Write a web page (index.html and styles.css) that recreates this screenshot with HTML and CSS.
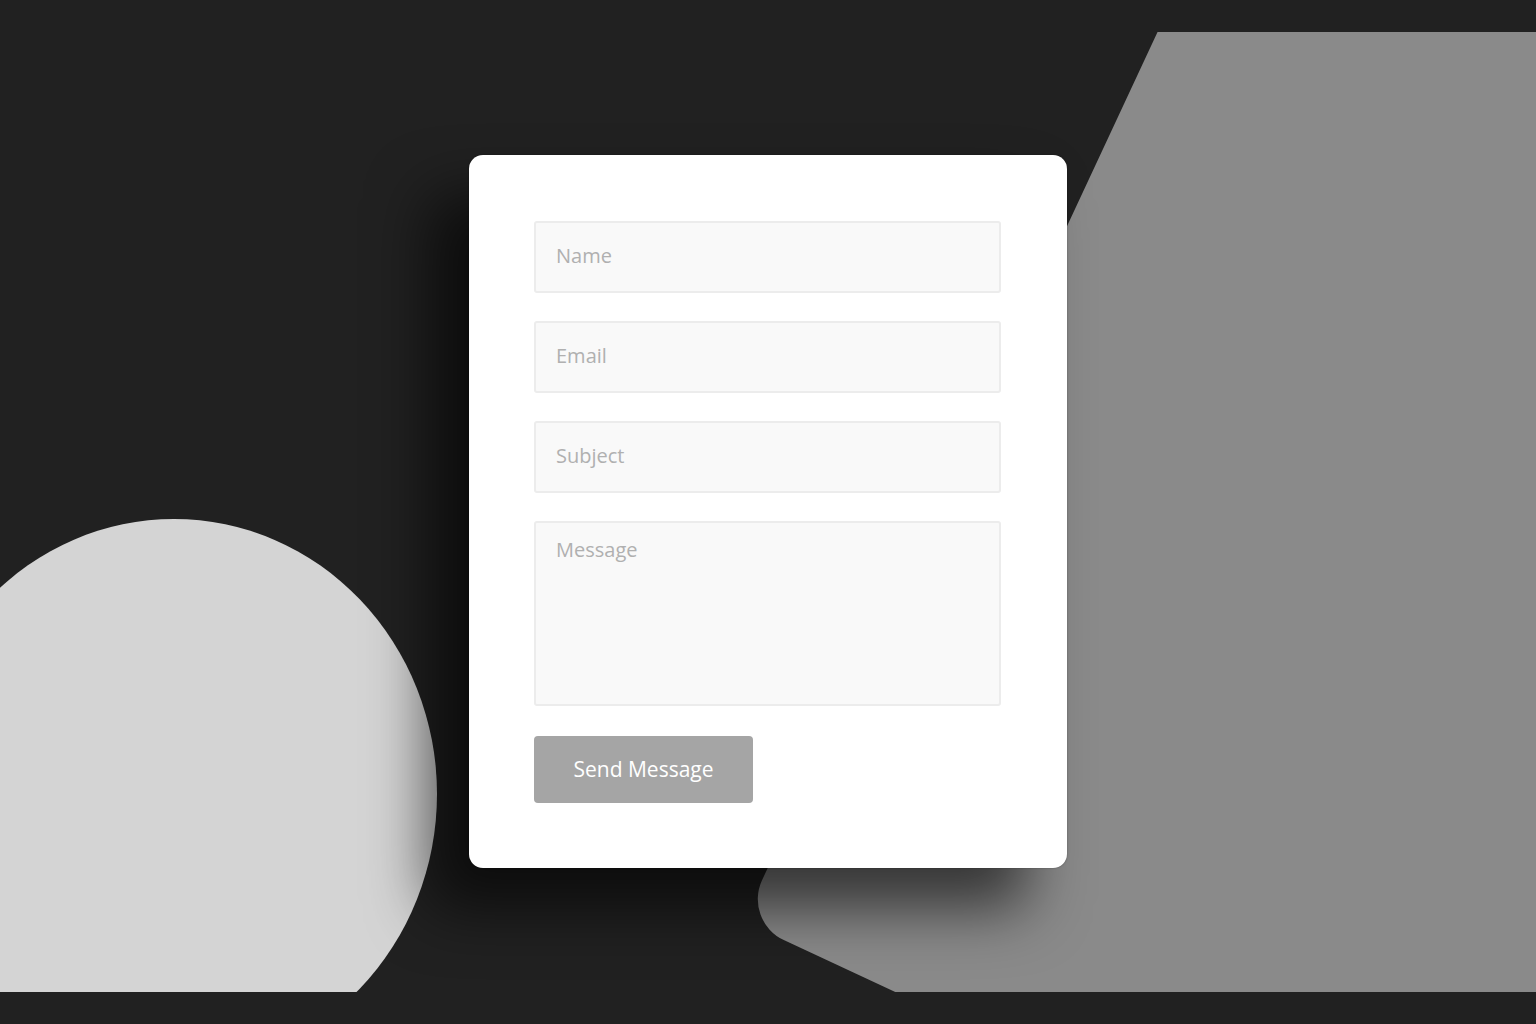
FILE: index.html
```html
<!DOCTYPE html>
<html lang="en">
<head>
<meta charset="utf-8">
<title>Contact</title>
<link rel="stylesheet" href="styles.css">
</head>
<body>
<main class="stage">
  <div class="shape shape-slab"></div>
  <div class="shape shape-disc"></div>
  <form class="card">
    <input class="field" type="text" placeholder="Name">
    <input class="field" type="email" placeholder="Email">
    <input class="field" type="text" placeholder="Subject">
    <textarea class="field field-area" placeholder="Message"></textarea>
    <button class="send" type="button">Send Message</button>
  </form>
</main>
</body>
</html>
```
FILE: styles.css
```css
* { box-sizing: border-box; }
html, body {
  margin: 0;
  padding: 0;
  background: #212121;
  width: 1536px;
  height: 1024px;
  overflow: hidden;
}
.stage {
  position: relative;
  margin-top: 32px;
  height: 960px;
  overflow: hidden;
  background: #212121;
  display: flex;
  align-items: center;
  justify-content: center;
}
.shape {
  position: absolute;
}
.shape-slab {
  left: 743px;
  top: -611px;
  width: 1600px;
  height: 1500px;
  background: #8a8a8a;
  border-radius: 45px;
  transform-origin: 0 100%;
  transform: rotate(25deg);
}
.shape-disc {
  left: -89px;
  top: 487px;
  width: 526px;
  height: 550px;
  border-radius: 50%;
  background: #d4d4d4;
}
.card {
  position: relative;
  width: 598px;
  height: 713px;
  margin-top: -1px;
  background: #ffffff;
  border-radius: 14px;
  padding: 66px 66px 65px 65px;
  display: flex;
  flex-direction: column;
  align-items: flex-start;
  gap: 28px;
  box-shadow: 0 0 2px rgba(0, 0, 0, 0.35), -40px 40px 60px rgba(0, 0, 0, 0.62);
  font-family: "Open Sans", "Noto Sans", sans-serif;
}
.field {
  display: block;
  width: 467px;
  height: 72px;
  margin: 0;
  padding: 0 20px 3px;
  background: #f9f9f9;
  border: 2px solid #ececec;
  border-radius: 3px;
  font-family: inherit;
  font-size: 20px;
  color: #555;
  outline: none;
}
.field::placeholder {
  color: #b0b0b0;
  opacity: 1;
}
.field-area {
  height: 185px;
  padding-top: 14px;
  resize: none;
  line-height: 26px;
}
.send {
  margin-top: 2px;
  width: 219px;
  height: 67px;
  padding: 0 0 2px;
  border: none;
  border-radius: 4px;
  background: #a5a5a5;
  color: #ffffff;
  font-family: inherit;
  font-size: 21px;
  cursor: pointer;
}
```
